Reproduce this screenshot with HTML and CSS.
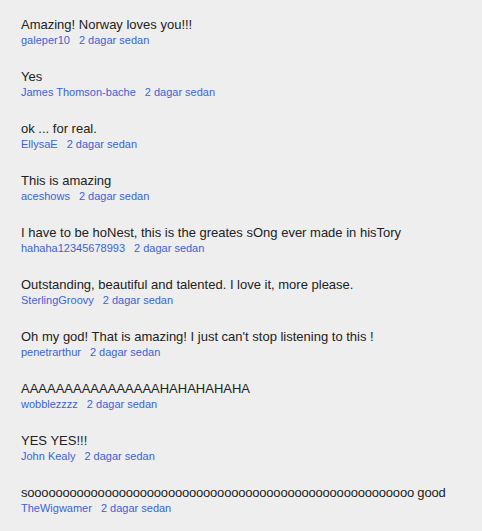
FILE: index.html
```html
<!DOCTYPE html>
<html>
<head>
<meta charset="utf-8">
<link rel="stylesheet" href="styles.css">
</head>
<body>
<ul class="comments">
  <li class="comment"><p class="text">Amazing! Norway loves you!!!</p><p class="meta"><a class="author">galeper10</a><span class="time">2 dagar sedan</span></p></li>
  <li class="comment"><p class="text">Yes</p><p class="meta"><a class="author">James Thomson-bache</a><span class="time">2 dagar sedan</span></p></li>
  <li class="comment"><p class="text">ok ... for real.</p><p class="meta"><a class="author">EllysaE</a><span class="time">2 dagar sedan</span></p></li>
  <li class="comment"><p class="text">This is amazing</p><p class="meta"><a class="author">aceshows</a><span class="time">2 dagar sedan</span></p></li>
  <li class="comment"><p class="text">I have to be hoNest, this is the greates sOng ever made in hisTory</p><p class="meta"><a class="author">hahaha12345678993</a><span class="time">2 dagar sedan</span></p></li>
  <li class="comment"><p class="text">Outstanding, beautiful and talented. I love it, more please.</p><p class="meta"><a class="author">SterlingGroovy</a><span class="time">2 dagar sedan</span></p></li>
  <li class="comment"><p class="text">Oh my god! That is amazing! I just can't stop listening to this !</p><p class="meta"><a class="author">penetrarthur</a><span class="time">2 dagar sedan</span></p></li>
  <li class="comment"><p class="text">AAAAAAAAAAAAAAAAHAHAHAHAHA</p><p class="meta"><a class="author">wobblezzzz</a><span class="time">2 dagar sedan</span></p></li>
  <li class="comment"><p class="text">YES YES!!!</p><p class="meta"><a class="author">John Kealy</a><span class="time">2 dagar sedan</span></p></li>
  <li class="comment"><p class="text long">sooooooooooooooooooooooooooooooooooooooooooooooooooooooo good</p><p class="meta"><a class="author">TheWigwamer</a><span class="time">2 dagar sedan</span></p></li>
</ul>
</body>
</html>
```
FILE: styles.css
```css
html, body {
  margin: 0;
  padding: 0;
  background: #eeeeee;
}
body {
  font-family: "Liberation Sans", Arial, sans-serif;
  color: #222222;
}
.comments {
  list-style: none;
  margin: 0;
  padding: 17px 0 0 21px;
  display: flex;
  flex-direction: column;
  gap: 22px;
}
.comment {
  display: flex;
  flex-direction: column;
}
.text {
  margin: 0;
  font-size: 13px;
  line-height: 16px;
  white-space: nowrap;
}
.text.long {
  letter-spacing: -0.2px;
}
.meta {
  margin: 0;
  font-size: 11px;
  line-height: 14px;
  color: #3d63d6;
  display: flex;
  gap: 9px;
}
.author, .time {
  color: #3d63d6;
}
```
